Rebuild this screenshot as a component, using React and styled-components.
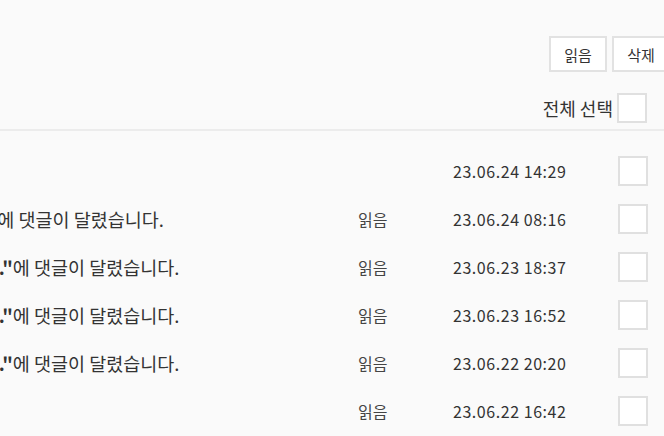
import React from 'react';
import styled, { createGlobalStyle } from 'styled-components';

const GlobalStyle = createGlobalStyle`
  html, body {
    margin: 0;
    padding: 0;
    overflow: hidden;
    background: #fafafa;
  }
  body {
    font-family: "Noto Sans CJK KR", "Noto Sans", sans-serif;
    color: #333;
  }
`;

const Page = styled.div`
  width: 664px;
  height: 436px;
  overflow: hidden;
`;

// the list is wider than the window; its left part runs off screen
const Wrapper = styled.div`
  width: 1000px;
  margin-left: -330px;
`;

const Toolbar = styled.div`
  display: flex;
  justify-content: flex-end;
  gap: 5px;
  padding-top: 36px;
`;

const ToolButton = styled.button`
  width: 58px;
  height: 36px;
  border: 2px solid #e2e2e2;
  background: #fff;
  color: #333;
  font-family: inherit;
  font-size: 15px;
  padding: 0;
  cursor: pointer;
`;

const SelectAll = styled.label`
  display: flex;
  justify-content: flex-end;
  align-items: center;
  gap: 4px;
  margin-top: 21px;
  padding: 0 23px 6px 0;
  border-bottom: 2px solid #ececec;
  font-size: 18px;
`;

const Check = styled.input.attrs({ type: 'checkbox' })`
  appearance: none;
  margin: 0;
  width: 30px;
  height: 30px;
  border: 2px solid #e0e0e0;
  background: #fff;
  box-sizing: border-box;
`;

const List = styled.ul`
  list-style: none;
  margin: 0;
  padding: 16px 0 0;
`;

const Row = styled.li`
  display: grid;
  grid-template-columns: 1fr 95px 165px 30px;
  align-items: center;
  height: 48px;
  padding-right: 22px;
  font-size: 16px;
`;

const Message = styled.div`
  padding-left: 85px;
  white-space: nowrap;
  font-size: 18.5px;
`;

const Title = styled.b`
  font-weight: 700;
`;

const Status = styled.span`
  color: #444;
`;

const Date = styled.span`
  letter-spacing: 0.55px;
`;

const notices = [
  { title: null, text: '새 쪽지가 도착했습니다.', read: false, date: '23.06.24 14:29' },
  { title: '오늘 저녁 메뉴 추천 받습니다', text: '에 댓글이 달렸습니다.', read: true, date: '23.06.24 08:16' },
  { title: '주말에 같이 등산 가실 분들을...', text: '에 댓글이 달렸습니다.', read: true, date: '23.06.23 18:37' },
  { title: '이번 프로젝트 회의록 공유 드...', text: '에 댓글이 달렸습니다.', read: true, date: '23.06.23 16:52' },
  { title: '중고 노트북 판매해요 상태 좋...', text: '에 댓글이 달렸습니다.', read: true, date: '23.06.22 20:20' },
  { title: null, text: '회원가입을 축하합니다.', read: true, date: '23.06.22 16:42' },
];

const App = () => (
  <Page>
    <GlobalStyle />
    <Wrapper>
      <Toolbar>
        <ToolButton>읽음</ToolButton>
        <ToolButton>삭제</ToolButton>
      </Toolbar>
      <SelectAll>
        전체 선택
        <Check />
      </SelectAll>
      <List>
        {notices.map((n) => (
          <Row key={n.date}>
            <Message>
              {n.title && <Title>"{n.title}"</Title>}
              {n.text}
            </Message>
            <Status>{n.read ? '읽음' : ''}</Status>
            <Date>{n.date}</Date>
            <Check />
          </Row>
        ))}
      </List>
    </Wrapper>
  </Page>
);

export default App;
